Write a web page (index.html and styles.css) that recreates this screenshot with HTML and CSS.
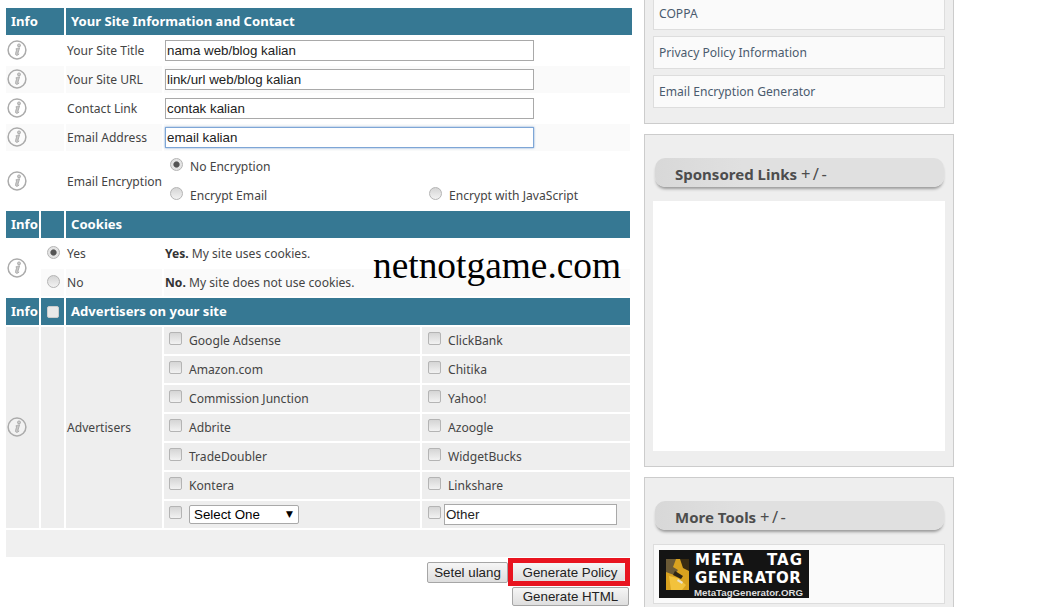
FILE: index.html
```html
<!DOCTYPE html>
<html lang="en">
<head>
<meta charset="utf-8">
<title>Privacy Policy Generator</title>
<link rel="stylesheet" href="styles.css">
</head>
<body>
<svg class="defs" width="0" height="0" aria-hidden="true">
  <symbol id="info" viewBox="0 0 20 20">
    <circle cx="10" cy="10" r="8.9" fill="#fff" fill-opacity=".25" stroke="#ababab" stroke-width="1.5"/>
    <path d="M10.2 8.4 12.6 7.8 10.9 13.4c-.2.7.2.9 1.2.5-.7 1.3-3.5 2.2-3.6.3-.1-.9.8-3.2 1.1-4.3.1-.6-.2-.9-.8-.9z" fill="#c9c9c9" stroke="#a2a2a2" stroke-width=".8"/>
    <circle cx="12" cy="5.4" r="1.5" fill="#c9c9c9" stroke="#a2a2a2" stroke-width=".8"/>
  </symbol>
</svg>
<div class="page">
  <main class="form">
    <table class="tbl wide">
      <colgroup><col class="c58"><col class="c566"></colgroup>
      <tr class="head"><th>Info</th><th>Your Site Information and Contact</th></tr>
    </table>
    <table class="tbl">
      <colgroup><col class="c58"><col class="c96"><col class="c466"></colgroup>
      <tr class="row"><td><svg class="ic"><use href="#info"/></svg></td><td class="lab">Your Site Title</td><td class="fld"><input class="txt" type="text" value="nama web/blog kalian"></td></tr>
      <tr class="row alt"><td><svg class="ic"><use href="#info"/></svg></td><td class="lab">Your Site URL</td><td class="fld"><input class="txt" type="text" value="link/url web/blog kalian"></td></tr>
      <tr class="row"><td><svg class="ic"><use href="#info"/></svg></td><td class="lab">Contact Link</td><td class="fld"><input class="txt" type="text" value="contak kalian"></td></tr>
      <tr class="row alt"><td><svg class="ic"><use href="#info"/></svg></td><td class="lab">Email Address</td><td class="fld"><input class="txt focus" type="text" value="email kalian"></td></tr>
      <tr class="tall"><td><svg class="ic"><use href="#info"/></svg></td><td class="lab">Email Encryption</td>
        <td class="enc">
          <div class="enc-grid">
            <label class="opt"><input class="rad" type="radio" name="enc" checked>No Encryption</label>
            <span></span>
            <label class="opt"><input class="rad" type="radio" name="enc">Encrypt Email</label>
            <label class="opt"><input class="rad" type="radio" name="enc">Encrypt with JavaScript</label>
          </div>
        </td>
      </tr>
    </table>
    <div class="cookies">
      <table class="tbl">
        <colgroup><col class="c33"><col class="c23"><col class="c96"><col class="c466"></colgroup>
        <tr class="head"><th>Info</th><th></th><th colspan="2">Cookies</th></tr>
        <tr class="row"><td class="mid" rowspan="2"><svg class="ic"><use href="#info"/></svg></td><td class="ctr"><input class="rad solo" type="radio" name="ck" checked></td><td class="lab">Yes</td><td class="desc"><b>Yes.</b> My site uses cookies.</td></tr>
        <tr class="row alt"><td class="ctr"><input class="rad solo" type="radio" name="ck"></td><td class="lab">No</td><td class="desc"><b>No.</b> My site does not use cookies.</td></tr>
      </table>
      <div class="mark">netnotgame.com</div>
    </div>
    <table class="tbl">
      <colgroup><col class="c33"><col class="c23"><col class="c96"><col class="c256"><col class="c208"></colgroup>
      <tr class="head"><th>Info</th><th class="ctr"><input class="chk hd" type="checkbox"></th><th colspan="3">Advertisers on your site</th></tr>
      <tr class="row gr"><td rowspan="7"><svg class="ic"><use href="#info"/></svg></td><td rowspan="7"></td><td class="lab" rowspan="7">Advertisers</td>
        <td><label class="ad"><input class="chk" type="checkbox">Google Adsense</label></td><td><label class="ad"><input class="chk" type="checkbox">ClickBank</label></td></tr>
      <tr class="row gr"><td><label class="ad"><input class="chk" type="checkbox">Amazon.com</label></td><td><label class="ad"><input class="chk" type="checkbox">Chitika</label></td></tr>
      <tr class="row gr"><td><label class="ad"><input class="chk" type="checkbox">Commission Junction</label></td><td><label class="ad"><input class="chk" type="checkbox">Yahoo!</label></td></tr>
      <tr class="row gr"><td><label class="ad"><input class="chk" type="checkbox">Adbrite</label></td><td><label class="ad"><input class="chk" type="checkbox">Azoogle</label></td></tr>
      <tr class="row gr"><td><label class="ad"><input class="chk" type="checkbox">TradeDoubler</label></td><td><label class="ad"><input class="chk" type="checkbox">WidgetBucks</label></td></tr>
      <tr class="row gr"><td><label class="ad"><input class="chk" type="checkbox">Kontera</label></td><td><label class="ad"><input class="chk" type="checkbox">Linkshare</label></td></tr>
      <tr class="row gr"><td><div class="ad"><input class="chk" type="checkbox"><span class="sel-wrap"><select class="sel"><option>Select One</option></select></span></div></td><td><div class="ad other"><input class="chk" type="checkbox"><input class="txt oth" type="text" value="Other"></div></td></tr>
      <tr class="row foot"><td colspan="5"></td></tr>
    </table>
    <div class="actions">
      <div class="act-row">
        <button class="btn reset" type="button">Setel ulang</button>
        <div class="hl"><button class="btn gen" type="button">Generate Policy</button></div>
      </div>
      <button class="btn html" type="button">Generate HTML</button>
    </div>
  </main>
  <aside class="side">
    <section class="panel first">
      <a class="item">COPPA</a>
      <a class="item">Privacy Policy Information</a>
      <a class="item">Email Encryption Generator</a>
    </section>
    <section class="panel">
      <h3 class="pill">Sponsored Links <span class="pm">+/-</span></h3>
      <div class="ads"></div>
    </section>
    <section class="panel">
      <h3 class="pill">More Tools <span class="pm">+/-</span></h3>
      <a class="item tool">
        <div class="logo">
          <svg class="pic" viewBox="0 0 23 31">
            <rect width="23" height="31" fill="#d9a21f"/>
            <path d="M0 0h10l-3 8 5 3-4 5-8-3z" fill="#6b5a36"/>
            <path d="M14 0h9v12l-6-3z" fill="#3a2c12"/>
            <path d="M3 17l9 2 8 7-4 5H5z" fill="#f2c23c"/>
            <path d="M9 12l8 5-2 3-8-4z" fill="#2d2415"/>
            <path d="M12 20l5 3-1 2-5-3z" fill="#e8e0c8"/>
          </svg>
          <div class="logo-txt">
            <div class="l1"><span>META</span><span>TAG</span></div>
            <div class="l2">GENERATOR</div>
            <div class="l3">MetaTagGenerator.ORG</div>
          </div>
        </div>
      </a>
    </section>
  </aside>
</div>
</body>
</html>
```

FILE: styles.css
```css
html, body { margin: 0; padding: 0; height: 607px; overflow: hidden; background: #fff; }
body { font-family: "Noto Sans", Tahoma, sans-serif; font-size: 12.1px; color: #444; }
.defs { display: block; height: 0; }
.page { display: flex; align-items: flex-start; height: 607px; overflow: hidden; }
.form { width: 640px; padding: 6px 0 0 4px; flex: none; }
.tbl { border-collapse: separate; border-spacing: 2px; table-layout: fixed; margin-top: -2px; width: 628px; }
.tbl.wide { width: 630px; margin-top: 0; }
.c58 { width: 58px; } .c566 { width: 566px; } .c96 { width: 96px; } .c466 { width: 466px; }
.c33 { width: 33px; } .c23 { width: 23px; } .c256 { width: 256px; } .c208 { width: 208px; }
.tbl td, .tbl th { padding: 0; }
.head th { background: #367893; color: #fff; height: 27px; box-sizing: border-box; text-align: left; padding: 0 0 2px 5px; font-size: 13.1px; font-weight: 700; white-space: nowrap; overflow: hidden; }
.head th.ctr { padding: 0; text-align: center; }
.row td { height: 27px; }
.row.alt td { background: #fafafa; }
.row.alt td.mid { background: transparent; }
.row.gr td, .tbl td[rowspan="7"] { background: #eee; }
.row.foot td { background: #f0f0f0; }
.tall td { height: 56px; }
.ic { display: block; width: 20px; height: 20px; margin: -1px 0 0 1px; }
.tbl td.lab { white-space: nowrap; padding-left: 1px; }
.txt { box-sizing: border-box; width: 369px; height: 21px; border: 1px solid #a9a9a9; margin: 0 0 0 1px; padding: 0 1px; background: #fff; display: block; font: 13.33px "Liberation Sans", Arial, sans-serif; color: #222; outline: none; }
.txt.focus { border-color: #7ea6d6; box-shadow: 0 0 2px #7ea6d6; }
.txt.oth { width: 173px; margin: 0; }
.tbl td.enc { padding-left: 6px; vertical-align: top; }
.enc-grid { display: grid; grid-template-columns: 259px 1fr; grid-auto-rows: 29px; align-items: center; height: 54px; margin-top: -1px; }
.opt { display: flex; align-items: center; gap: 7px; }
.rad, .chk { appearance: none; -webkit-appearance: none; box-sizing: border-box; width: 13px; height: 13px; margin: 0; border: 1px solid #b4b4b4; flex: none; background: linear-gradient(#d5d5d5, #f2f2f2); position: relative; top: -2px; }
.rad { border-radius: 50%; }
.rad:checked { background: radial-gradient(circle, #555 0 2.6px, #e4e4e4 3.6px); }
.chk { border-radius: 2px; }
.rad.solo { display: block; margin: 0 auto 0 6px; top: -1px; }
.chk.hd { display: block; width: 12px; height: 12px; margin: 0 auto; top: 0; background: #e8e8e8; border-color: #ccc; }
.tbl td.desc { white-space: nowrap; padding-left: 1px; }
.desc b { color: #333; }
.cookies { position: relative; }
.mark { position: absolute; left: 369px; top: 36px; font: 37.4px/42px "Liberation Serif", serif; color: #000; white-space: nowrap; }
.ad { display: flex; align-items: center; gap: 7px; padding-left: 5px; }
.row.gr td:last-child .ad { padding-left: 6px; }
.row.gr td:last-child .ad.other { gap: 3px; }
.sel-wrap { position: relative; display: block; }
.sel-wrap::after { content: "\25BC"; position: absolute; right: 6px; top: 4px; font: 9px "DejaVu Sans", sans-serif; color: #000; pointer-events: none; }
.sel { appearance: none; -webkit-appearance: none; display: block; box-sizing: border-box; width: 110px; height: 19px; border: 1px solid #a9a9a9; border-radius: 2px; background: #fff; padding: 0 4px; font: 13.33px "Liberation Sans", Arial, sans-serif; color: #000; }
.actions { display: flex; flex-direction: column; align-items: flex-end; width: 626px; margin-top: -1px; }
.act-row { display: flex; align-items: center; }
.btn { box-sizing: border-box; margin: 0; padding: 0; height: 21px; border: 1px solid #a6a6a6; border-radius: 2px; background: linear-gradient(#f6f6f6, #dedede); font: 13.33px "Liberation Sans", Arial, sans-serif; color: #222; }
.reset { width: 81px; }
.hl { box-sizing: border-box; width: 122px; height: 28px; border: 5px solid #e8141f; display: flex; }
.gen { width: 100%; height: 100%; border-width: 0; padding-left: 2px; }
.html { width: 117px; height: 19px; margin: 1px 1px 0 0; }
.side { width: 310px; flex: none; margin-top: -12px; display: flex; flex-direction: column; gap: 10px; }
.panel { border: 1px solid #ccc; background: #eee; padding: 23px 8px 15px; display: flex; flex-direction: column; }
.panel.first { padding: 8px 8px 15px; gap: 6px; }
.item { box-sizing: border-box; display: flex; align-items: center; height: 33px; background: #fafafa; border: 1px solid #ddd; padding-left: 5px; color: #4a5b6e; }
.pill { box-sizing: border-box; margin: 0 1px 14px 2px; height: 29px; padding: 3px 0 0 20px; border-radius: 10px; background: linear-gradient(90deg, #d8d8d8, #e0e0e0 30%); box-shadow: 0 3px 3px -1px #999; font: 700 15px/26px "Noto Sans", Tahoma, sans-serif; color: #4d4d4d; }
.pm { font-weight: 400; font-size: 16.5px; letter-spacing: 2.5px; }
.ads { height: 250px; background: #fff; }
.tool { height: 60px; }
.logo { box-sizing: border-box; width: 150px; height: 48px; background: #141414; display: flex; align-items: center; gap: 6px; padding: 0 6px 0 7px; }
.pic { width: 23px; height: 31px; flex: none; }
.logo-txt { flex: 1; min-width: 0; align-self: flex-start; padding-top: 1px; color: #fff; font-family: "DejaVu Sans", sans-serif; font-weight: 700; }
.l1 { display: flex; justify-content: space-between; font-size: 15px; line-height: 18px; letter-spacing: 1px; }
.l2 { font-size: 15px; line-height: 18px; letter-spacing: .5px; white-space: nowrap; }
.l3 { font: 700 9.7px/11px "Liberation Sans", sans-serif; color: #ddd; white-space: nowrap; margin-left: -1px; }
```
